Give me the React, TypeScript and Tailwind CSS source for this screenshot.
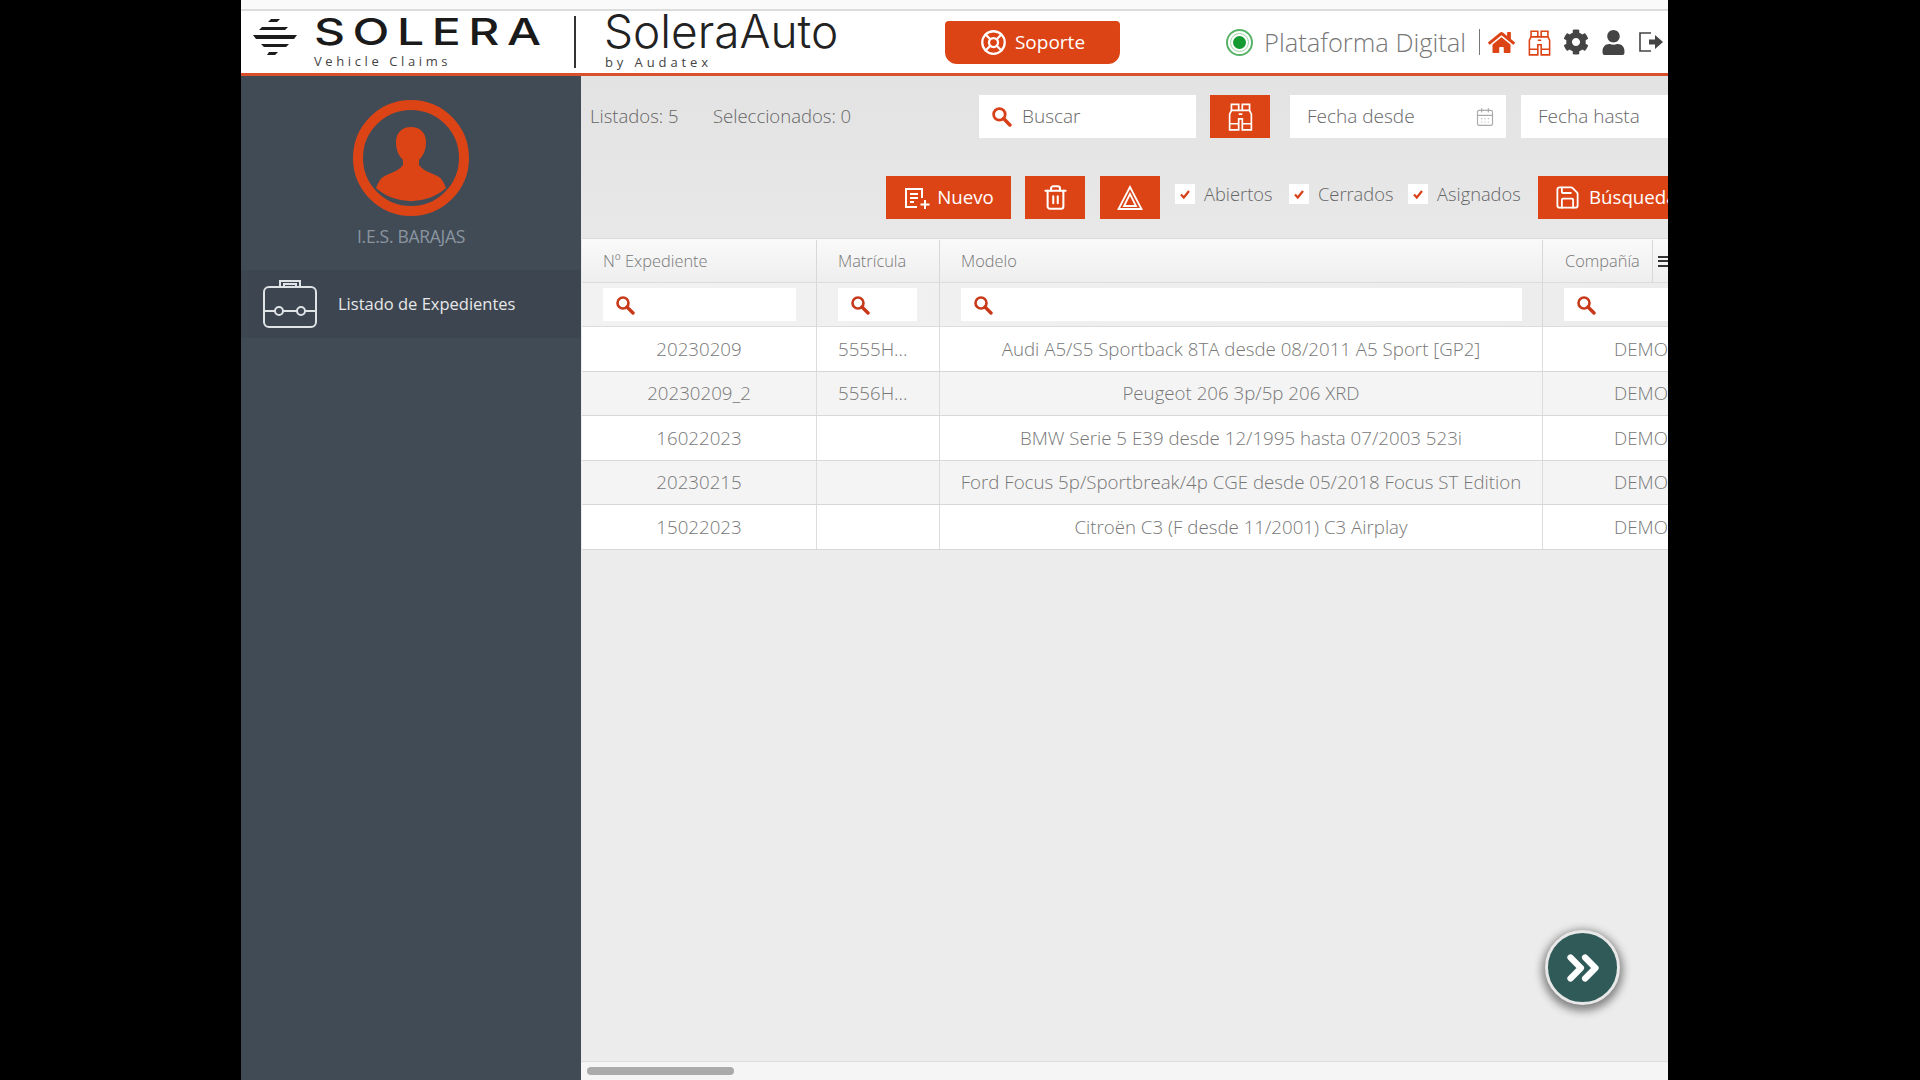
import { CalendarDays, ChevronsRight, LifeBuoy, Save, Trash2 } from "lucide-react"
import { FaCog, FaHome, FaUser } from "react-icons/fa"

const rows = [
  { id: "20230209", plate: "5555H...", model: "Audi A5/S5 Sportback 8TA desde 08/2011 A5 Sport [GP2]" },
  { id: "20230209_2", plate: "5556H...", model: "Peugeot 206 3p/5p 206 XRD" },
  { id: "16022023", plate: "", model: "BMW Serie 5 E39 desde 12/1995 hasta 07/2003 523i" },
  { id: "20230215", plate: "", model: "Ford Focus 5p/Sportbreak/4p CGE desde 05/2018 Focus ST Edition" },
  { id: "15022023", plate: "", model: "Citroën C3 (F desde 11/2001) C3 Airplay" },
]

function SearchIcon({ className }: { className?: string }) {
  return (
    <svg viewBox="0 0 20 20" className={className} fill="none" stroke="currentColor">
      <circle cx="8" cy="8" r="5.5" strokeWidth="2.6" />
      <path d="M12 12l6 6" strokeWidth="3.4" strokeLinecap="round" />
    </svg>
  )
}

function BinocularsIcon({ className }: { className?: string }) {
  return (
    <svg viewBox="0 0 24 24" className={className} fill="none" stroke="currentColor" strokeWidth="1.4">
      <path d="M3 23V10l1.500-3V2h6v5h3V2h6v5L21 10v13h-7.500v-9h-3v9z" />
      <path d="M3 18h7.500M13.500 18H21M10.500 10h3M4.500 7h6M13.500 7h6" />
    </svg>
  )
}

function Check({ label, className }: { label: string; className: string }) {
  return (
    <div className={`flex shrink-0 items-center ${className}`}>
      <span className="flex h-5 w-5 items-center justify-center bg-white">
        <svg viewBox="0 0 12 12" className="h-3 w-3" fill="none" stroke="#d8401a" strokeWidth="2.2">
          <path d="M2 6.500l2.800 3L10 3" />
        </svg>
      </span>
      <span className="ml-[9px] text-[18.3px] font-light text-[#666]">{label}</span>
    </div>
  )
}

function FilterBox({ className }: { className: string }) {
  return (
    <div className={`flex h-[33px] items-center bg-white ${className}`}>
      <SearchIcon className="ml-3 h-5 w-5 text-[#c8391a]" />
    </div>
  )
}

export default function App() {
  return (
    <div className="flex h-screen w-full overflow-hidden bg-black font-['Open_Sans',sans-serif]">
      <div className="ml-[241px] flex h-full w-[1427px] flex-col overflow-hidden bg-white">
        <div className="h-[11px] shrink-0 border-b-2 border-[#dcdcdc] bg-[#fafafa]" />

        <header className="flex h-[65px] shrink-0 items-center border-b-[3px] border-[#d8502c] bg-white">
          <svg viewBox="0 0 44 36" className="mb-[10px] ml-3 h-9 w-11 shrink-0" fill="#1c1c1c">
            <path d="M18 0h9l-3 3h-9zM9 8h26l-3 3H6zM0 16h44l-3 4H3zM8 25h28l-3 3H11zM16 33h9l-3 3h-8z" />
          </svg>
          <div className="mb-[2px] ml-[17px] w-[260px] shrink-0">
            <div className="w-fit origin-left scale-x-[1.3] text-[37px] leading-[38px] font-medium tracking-[5.8px] text-[#1a1a1a] font-['Inter',sans-serif]">
              SOLERA
            </div>
            <div className="mt-[2px] w-fit text-[13px] leading-[16px] tracking-[3.6px] text-[#444]">Vehicle Claims</div>
          </div>
          <div className="h-[52px] w-0.5 shrink-0 bg-[#333]" />
          <div className="mb-[3px] ml-7 w-[341px] shrink-0">
            <div className="-mt-1 w-fit text-[46px] leading-[46px] font-light text-[#222] font-['Inter',sans-serif]">SoleraAuto</div>
            <div className="mt-[1px] ml-px w-fit text-[13px] leading-[14px] tracking-[3.9px] text-[#444]">by Audatex</div>
          </div>
          <button className="flex h-[43px] w-[175px] shrink-0 items-center justify-center gap-2 rounded-t-sm rounded-b-xl bg-[#dd4415] text-[19px] text-white">
            <LifeBuoy size={27} strokeWidth={2} />
            Soporte
          </button>
          <span className="ml-[106px] flex h-[27px] w-[27px] shrink-0 items-center justify-center rounded-full border-2 border-[#58b368] bg-white">
            <span className="flex h-[19px] w-[19px] items-center justify-center rounded-full border border-[#9fd4a8]">
              <span className="h-[13px] w-[13px] rounded-full bg-[#159a32]" />
            </span>
          </span>
          <span className="ml-[11px] text-[25.5px] font-light whitespace-nowrap text-[#777]">Plataforma Digital</span>
          <span className="ml-[13px] h-[26px] w-px bg-[#777]" />
          <FaHome size={27} className="ml-[8px] shrink-0 text-[#dd4415]" />
          <BinocularsIcon className="ml-[11px] h-[27px] w-[27px] shrink-0 text-[#dd4415]" />
          <FaCog size={26} className="ml-[10px] shrink-0 text-[#444]" />
          <FaUser size={25} className="ml-[12px] shrink-0 text-[#444]" />
          <svg viewBox="0 0 26 24" className="ml-[12px] h-6 w-[26px] shrink-0 text-[#444]" fill="none" stroke="currentColor" strokeWidth="1.6">
            <path d="M13 3H2v18h11" />
            <path d="M11 9.500h6V5l8 7-8 7v-4.500h-6z" fill="currentColor" stroke="none" />
          </svg>
        </header>

        <div className="flex min-h-0 flex-1">
          <aside className="w-[340px] shrink-0 bg-[#414b56] pt-[24px]">
            <svg viewBox="0 0 116 116" className="mx-auto h-[116px] w-[116px]">
              <circle cx="58" cy="58" r="53" fill="none" stroke="#dd4415" strokeWidth="10" />
              <path
                d="M58 27c-9 0-15 6-15 15 0 7 2 13 7 18v5c-4 6-13 8-20 12-3 2-5 6-7 11A53 53 0 0 0 93 88c-2-5-4-9-7-11-7-4-16-6-20-12v-5c5-5 7-11 7-18 0-9-6-15-15-15z"
                fill="#dd4415"
              />
            </svg>
            <div className="mt-[7px] text-center text-[17.5px] tracking-[-0.3px] text-[#8a95a0]">I.E.S. BARAJAS</div>
            <div className="mt-[21px] flex h-[68px] items-center bg-[#3c4550] pl-[22px]">
              <svg viewBox="0 0 54 50" className="h-[50px] w-[54px] shrink-0" fill="none" stroke="#dfe3e6" strokeWidth="2">
                <path d="M17 8V2h20v6" />
                <path d="M21 8V5h12v3" />
                <rect x="1" y="8" width="52" height="40" rx="5" />
                <path d="M1 32h11M20 32h14M42 32h11" />
                <circle cx="16" cy="32" r="4" />
                <circle cx="38" cy="32" r="4" />
              </svg>
              <span className="ml-[21px] text-[16.5px] font-normal text-[#e8e8e8]">Listado de Expedientes</span>
            </div>
          </aside>

          <main className="relative flex min-w-0 flex-1 flex-col overflow-hidden bg-[#ebebeb] bg-gradient-to-b from-[#e3e3e3] to-[#ececec] to-30%">
            <div className="mt-[19px] flex h-[43px] shrink-0 items-center whitespace-nowrap">
              <span className="mb-[2px] ml-[9px] w-[123px] shrink-0 text-[18.5px] font-light text-[#666]">Listados: 5</span>
              <span className="mb-[2px] w-[266px] shrink-0 text-[18.5px] font-light text-[#666]">Seleccionados: 0</span>
              <div className="flex h-[43px] w-[217px] shrink-0 items-center bg-white">
                <SearchIcon className="ml-3 h-[21px] w-[21px] text-[#d8401a]" />
                <span className="ml-[10px] text-[19px] font-light text-[#666]">Buscar</span>
              </div>
              <button className="ml-[14px] flex h-[43px] w-[60px] shrink-0 items-center justify-center bg-[#dd4415] text-white">
                <BinocularsIcon className="h-[29px] w-[29px]" />
              </button>
              <div className="ml-5 flex h-[43px] w-[216px] shrink-0 items-center bg-white">
                <span className="ml-[17px] flex-1 text-[19px] font-light text-[#666]">Fecha desde</span>
                <CalendarDays size={20} strokeWidth={1.4} className="mr-[11px] text-[#aaa]" />
              </div>
              <div className="ml-[15px] flex h-[43px] w-[200px] shrink-0 items-center bg-white">
                <span className="ml-[17px] text-[19px] font-light text-[#666]">Fecha hasta</span>
              </div>
            </div>

            <div className="mt-[38px] flex h-[43px] shrink-0 items-center whitespace-nowrap">
              <button className="ml-[305px] flex h-[43px] w-[125px] shrink-0 items-center justify-center gap-[6px] bg-[#dd4415] text-[18.7px] text-white">
                <svg viewBox="0 0 28 24" className="h-6 w-7" fill="none" stroke="currentColor" strokeWidth="2">
                  <path d="M19 12V3H3v18h11" />
                  <path d="M7 8h8M7 12h8M7 16h4M22 14v9M17.500 18.500h9" />
                </svg>
                Nuevo
              </button>
              <button className="ml-[14px] flex h-[43px] w-[60px] shrink-0 items-center justify-center bg-[#dd4415] text-white">
                <Trash2 size={27} strokeWidth={1.8} />
              </button>
              <button className="ml-[15px] flex h-[43px] w-[60px] shrink-0 items-center justify-center bg-[#dd4415] text-white">
                <svg viewBox="0 0 28 28" className="h-7 w-7" fill="none" stroke="currentColor" strokeWidth="1.8">
                  <path d="M14 3L2.500 25h23z" />
                  <path d="M14 10L8 22h12z" />
                </svg>
              </button>
              <Check label="Abiertos" className="ml-[15px] w-[114px] -translate-y-1" />
              <Check label="Cerrados" className="w-[119px] -translate-y-1" />
              <Check label="Asignados" className="w-[130px] -translate-y-1" />
              <button className="flex h-[43px] w-[140px] shrink-0 items-center gap-2 bg-[#dd4415] pl-[16px] text-[18.7px] text-white">
                <Save size={27} strokeWidth={1.6} className="shrink-0" />
                Búsqueda
              </button>
            </div>

            <div className="mt-[19px] ml-[1px] shrink-0 text-[#777]">
              <div className="grid h-[45px] grid-cols-[235px_123px_603px_1fr] items-center border-t border-b border-[#dcdcdc] bg-gradient-to-b from-[#fafafa] to-[#eeeeee] pt-px text-[16.4px] font-light">
                <div className="flex h-full items-center border-r border-[#d8d8d8] pl-[21px]">Nº Expediente</div>
                <div className="flex h-full items-center border-r border-[#d8d8d8] pl-[21px]">Matrícula</div>
                <div className="flex h-full items-center border-r border-[#d8d8d8] pl-[21px]">Modelo</div>
                <div className="flex h-full items-center pl-[22px]">
                  Compañía
                  <span className="ml-[12px] flex h-full items-center border-l border-[#d8d8d8] pl-[5px]">
                    <span className="flex w-[14px] flex-col gap-[2.5px]">
                      <span className="h-0.5 bg-[#333]" />
                      <span className="h-0.5 bg-[#333]" />
                      <span className="h-0.5 bg-[#333]" />
                    </span>
                  </span>
                </div>
              </div>
              <div className="grid h-[44px] grid-cols-[235px_123px_603px_1fr] items-center border-b border-[#dcdcdc] bg-gradient-to-r from-[#f2f2f2] to-[#ececec]">
                <div className="flex h-full items-center border-r border-[#d8d8d8] pl-[21px]">
                  <FilterBox className="w-[193px]" />
                </div>
                <div className="flex h-full items-center border-r border-[#d8d8d8] pl-[21px]">
                  <FilterBox className="w-[79px]" />
                </div>
                <div className="flex h-full items-center border-r border-[#d8d8d8] pl-[21px]">
                  <FilterBox className="w-[561px]" />
                </div>
                <div className="flex h-full items-center pl-[21px]">
                  <FilterBox className="w-full" />
                </div>
              </div>
              {rows.map((row, i) => (
                <div
                  key={row.id}
                  className={`grid h-[44.5px] grid-cols-[235px_123px_603px_1fr] items-center border-b border-[#d8d8d8] text-[18.7px] font-light whitespace-nowrap ${
                    i % 2 === 0 ? "bg-white" : "bg-[#f4f4f4]"
                  }`}
                >
                  <div className="flex h-full items-center justify-center border-r border-[#dcdcdc]">{row.id}</div>
                  <div className="flex h-full items-center border-r border-[#dcdcdc] pl-[21px]">{row.plate}</div>
                  <div className="flex h-full items-center justify-center border-r border-[#dcdcdc]">{row.model}</div>
                  <div className="flex h-full items-center pl-[71px]">DEMO</div>
                </div>
              ))}
            </div>

            <div className="flex-1" />
            <div className="flex h-[19px] shrink-0 items-center border-t border-[#dedede] bg-[#f5f5f5] pl-[6px]">
              <div className="h-2 w-[147px] rounded-full bg-[#aaaaaa]" />
            </div>

            <button className="absolute right-[48px] bottom-[75px] flex h-[75px] w-[75px] items-center justify-center rounded-full border-[3px] border-[#e8e8e8] bg-[#2f5a58] text-white shadow-[0_3px_8px_3px_rgba(0,0,0,0.45)]">
              <ChevronsRight size={50} strokeWidth={3} />
            </button>
          </main>
        </div>
      </div>
    </div>
  )
}
